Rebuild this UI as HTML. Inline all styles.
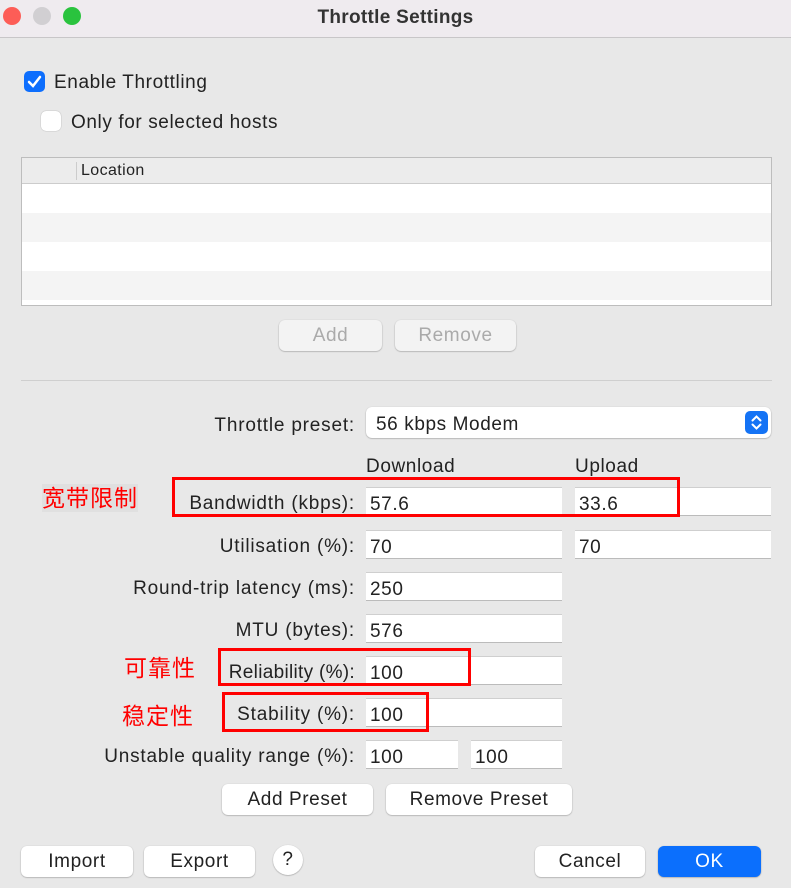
<!DOCTYPE html>
<html><head><meta charset="utf-8"><style>
*{box-sizing:border-box;margin:0;padding:0}
body{width:791px;height:888px;background:#e8e8e8;font-family:"Liberation Sans","Noto Sans CJK SC",sans-serif;color:#222;position:relative;overflow:hidden;font-size:19px;letter-spacing:0.6px}
.a{position:absolute}
.tb{left:0;top:0;width:791px;height:38px;background:#efebef;border-bottom:1px solid #c8c6c8}
.dot{width:18px;height:18px;border-radius:50%;top:7px}
.f{position:absolute;background:#fff;height:29px;border-top:1px solid #cfcfcf;border-bottom:1px solid #bbb;padding:6px 4px 0;font-size:19px}
.lbl{position:absolute;right:436px;font-size:19px;white-space:nowrap;letter-spacing:0.8px;margin-top:2px}
.btn{position:absolute;background:#fff;border-radius:6px;box-shadow:0 0.5px 1.5px rgba(0,0,0,.35);text-align:center;font-size:19px;line-height:32px;height:31px}
.red{position:absolute;border:3px solid #f00}
.cn{position:absolute;color:#f00;font-size:23px;line-height:28px;letter-spacing:1px}
</style></head><body>
<div class="a tb"></div>
<div class="a dot" style="left:3px;background:#fd5d57"></div>
<div class="a dot" style="left:33px;background:#d1cfd2"></div>
<div class="a dot" style="left:63px;background:#2ac33e"></div>
<div class="a" style="left:0;width:791px;top:7px;text-align:center;font-weight:bold;font-size:19px;color:#333;letter-spacing:0.3px">Throttle Settings</div>

<div class="a" style="left:24px;top:71px;width:21px;height:21px;border-radius:5px;background:#0d6efd"><svg width="21" height="21"><path d="M5 11l4 4 7-9" stroke="#fff" stroke-width="2.5" fill="none" stroke-linecap="round"/></svg></div>
<div class="a" style="left:54px;top:72px">Enable Throttling</div>
<div class="a" style="left:41px;top:111px;width:20px;height:20px;border-radius:5px;background:#fff;box-shadow:0 0 1px #888"></div>
<div class="a" style="left:71px;top:112px">Only for selected hosts</div>

<div class="a" style="left:21px;top:157px;width:751px;height:149px;background:#fff;border:1px solid #bdbdbd">
<div style="height:26px;background:#ececec;border-bottom:1px solid #ccc;position:relative"><div style="position:absolute;left:54px;top:4px;width:1px;height:18px;background:#ccc"></div><div style="position:absolute;left:59px;top:4px;font-size:16px;letter-spacing:0.4px">Location</div></div>
<div style="height:29px"></div><div style="height:29px;background:#f4f4f4"></div><div style="height:29px"></div><div style="height:29px;background:#f4f4f4"></div>
</div>
<div class="btn" style="left:279px;top:320px;width:103px;color:#aaa;background:#f3f3f3">Add</div>
<div class="btn" style="left:395px;top:320px;width:121px;color:#aaa;background:#f3f3f3">Remove</div>
<div class="a" style="left:21px;top:380px;width:751px;height:1px;background:#cfcfcf"></div>

<div class="lbl" style="top:413px">Throttle preset:</div>
<div class="a" style="left:366px;top:407px;width:405px;height:31px;background:#fff;border-radius:6px;box-shadow:0 0.5px 1.5px rgba(0,0,0,.35);padding:7px 10px;font-size:19px">56 kbps Modem</div>
<div class="a" style="left:745px;top:411px;width:23px;height:23px;border-radius:5px;background:#1473f5"><svg width="23" height="23"><path d="M7.5 9.5l4-4 4 4M7.5 13.5l4 4 4-4" stroke="#fff" stroke-width="2" fill="none" stroke-linecap="round"/></svg></div>
<div class="a" style="left:366px;top:456px">Download</div>
<div class="a" style="left:575px;top:456px">Upload</div>

<div class="lbl" style="top:491px">Bandwidth (kbps):</div>
<div class="f" style="left:366px;top:487px;width:196px">57.6</div>
<div class="f" style="left:575px;top:487px;width:196px">33.6</div>
<div class="lbl" style="top:534px">Utilisation (%):</div>
<div class="f" style="left:366px;top:530px;width:196px">70</div>
<div class="f" style="left:575px;top:530px;width:196px">70</div>
<div class="lbl" style="top:576px">Round-trip latency (ms):</div>
<div class="f" style="left:366px;top:572px;width:196px">250</div>
<div class="lbl" style="top:618px">MTU (bytes):</div>
<div class="f" style="left:366px;top:614px;width:196px">576</div>
<div class="lbl" style="top:660px;letter-spacing:0.3px">Reliability (%):</div>
<div class="f" style="left:366px;top:656px;width:196px">100</div>
<div class="lbl" style="top:702px">Stability (%):</div>
<div class="f" style="left:366px;top:698px;width:196px">100</div>
<div class="lbl" style="top:744px">Unstable quality range (%):</div>
<div class="f" style="left:366px;top:740px;width:92px">100</div>
<div class="f" style="left:471px;top:740px;width:91px">100</div>

<div class="red" style="left:172px;top:477px;width:508px;height:40px"></div>
<div class="red" style="left:218px;top:648px;width:253px;height:38px"></div>
<div class="red" style="left:222px;top:692px;width:207px;height:40px"></div>
<div class="cn" style="left:42px;top:484px;background:#e0e0e0">宽带限制</div>
<div class="cn" style="left:124px;top:654px">可靠性</div>
<div class="cn" style="left:122px;top:702px">稳定性</div>

<div class="btn" style="left:222px;top:784px;width:151px">Add Preset</div>
<div class="btn" style="left:386px;top:784px;width:186px">Remove Preset</div>
<div class="btn" style="left:21px;top:846px;width:112px">Import</div>
<div class="btn" style="left:144px;top:846px;width:111px">Export</div>
<div class="btn" style="left:273px;top:845px;width:30px;height:30px;border-radius:50%;line-height:30px">?</div>
<div class="btn" style="left:535px;top:846px;width:110px">Cancel</div>
<div class="btn" style="left:658px;top:846px;width:103px;background:#0b6ffd;color:#fff">OK</div>
</body></html>
